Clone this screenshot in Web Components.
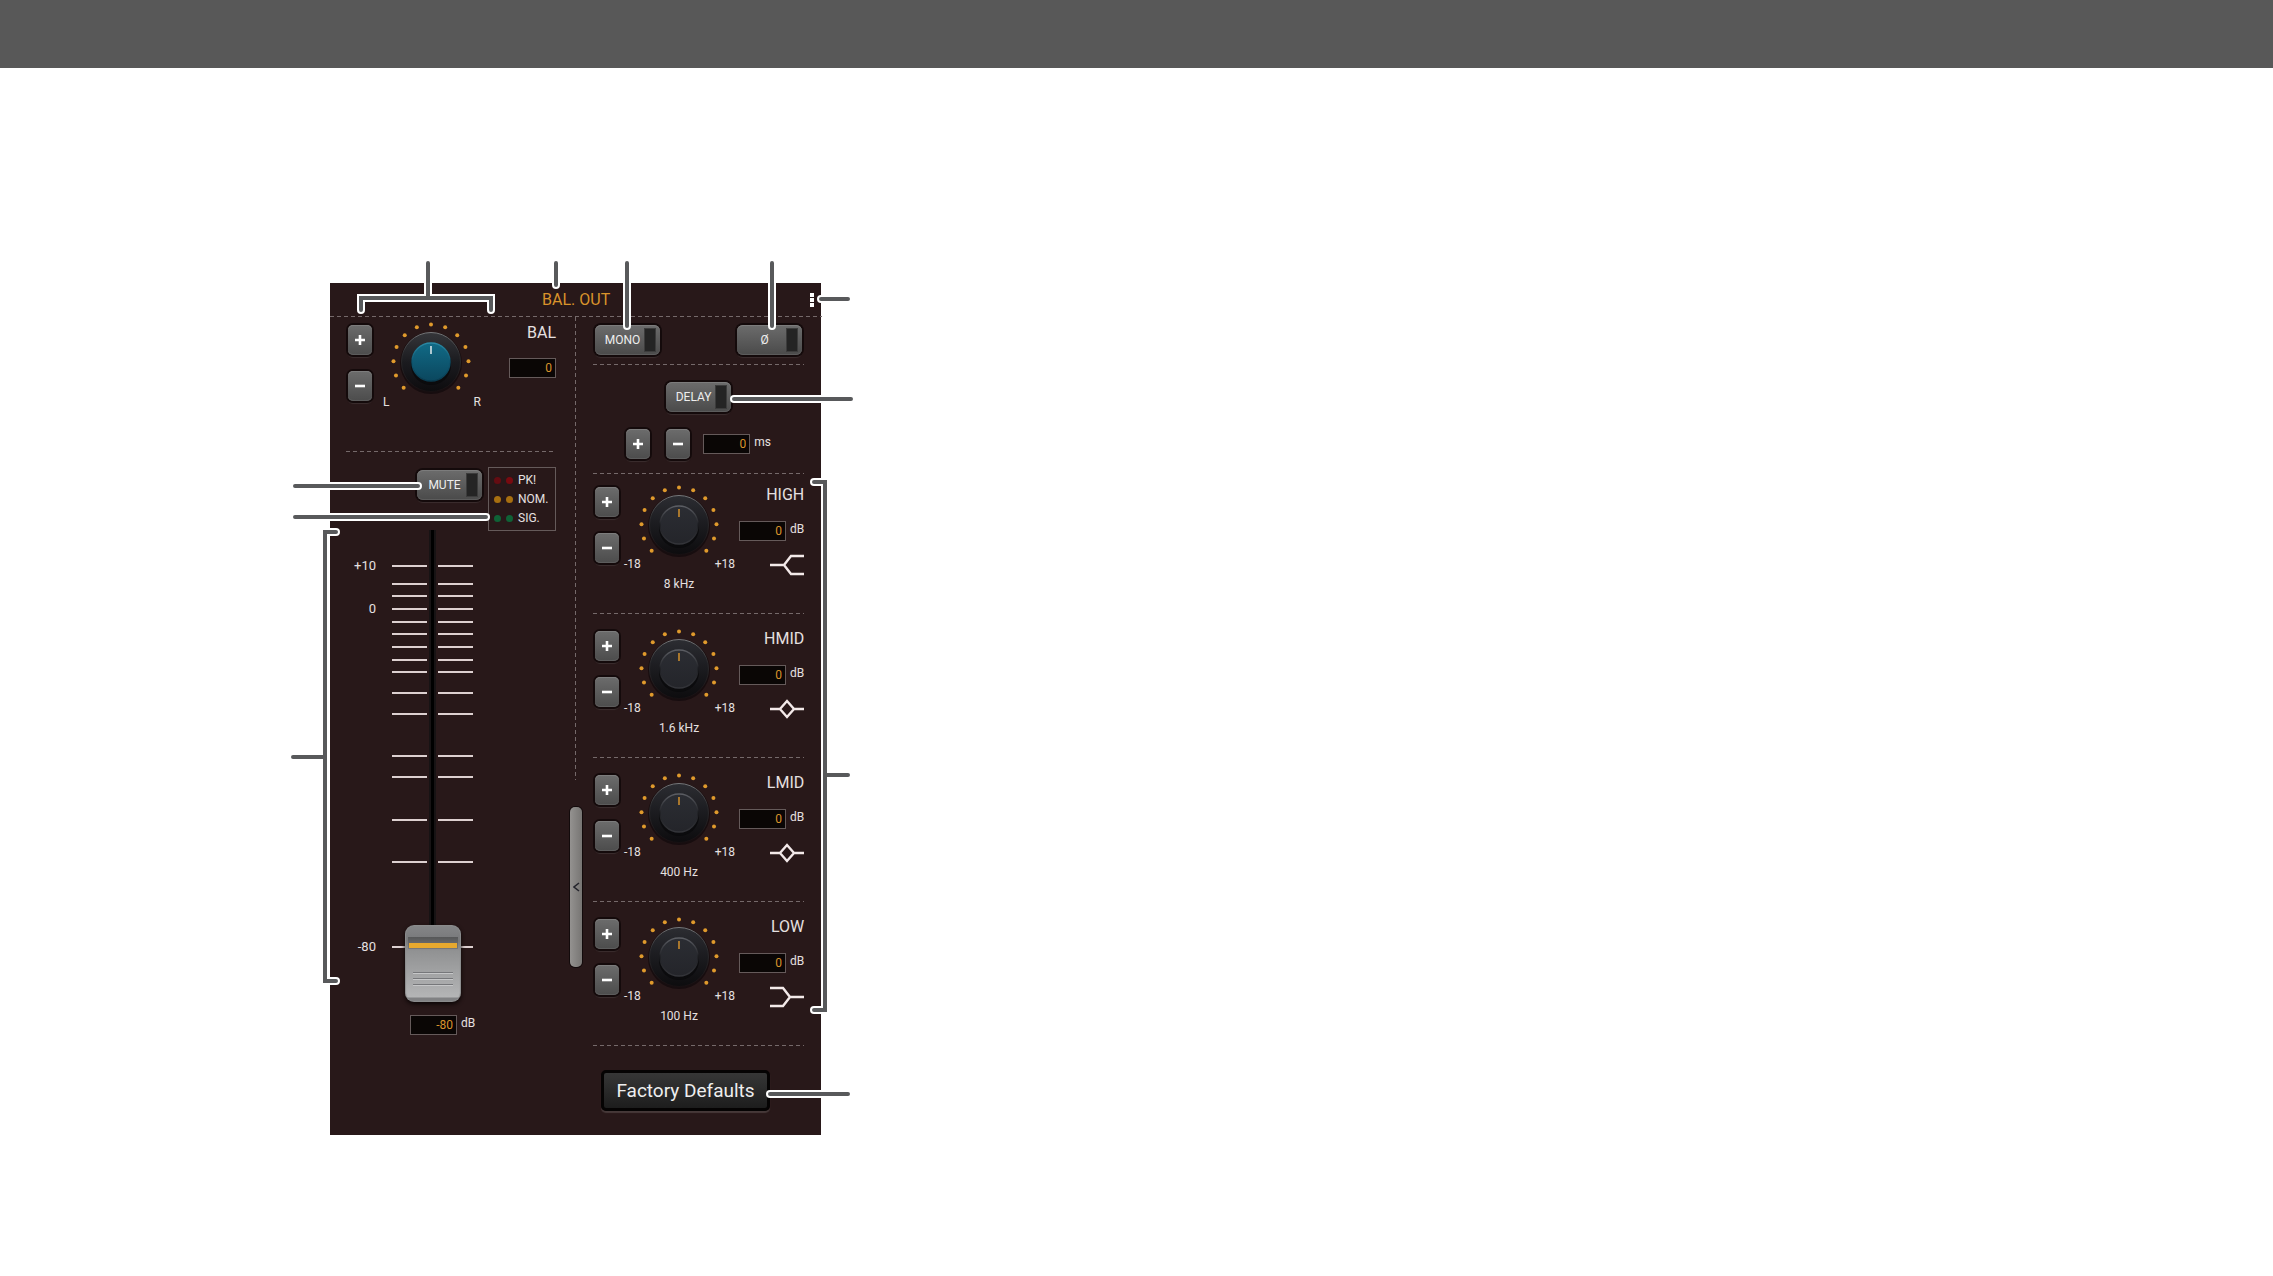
<!DOCTYPE html>
<html lang="en">
<head>
<meta charset="utf-8">
<title>Balanced output</title>
<style>
body{margin:0;background:#fff;font-family:Roboto,"Liberation Sans",sans-serif}
</style>
</head>
<body>
<page-bar></page-bar>
<page-figure>
  <channel-strip></channel-strip>
  <call-outs slot="notes"></call-outs>
</page-figure>
<script>
const define=(name,html,init)=>customElements.define(name,class extends HTMLElement{
  constructor(){
    super();
    this.attachShadow({mode:'open'});
  }
  connectedCallback(){
    if(this.shadowRoot.childNodes.length) return;
    this.shadowRoot.innerHTML=typeof html==='function'?html(this):html;
    if(init) init(this.shadowRoot,this);
  }
});

const attr=(el,name,def='')=>el.getAttribute(name)??def;

define('page-bar',`<style>
:host{display:block;height:68px;background:#585858}
</style>`);

define('page-figure',`<style>
:host{display:block;padding:215px 330px 140px}
div{position:relative;width:fit-content}
</style>
<div><slot></slot><slot name="notes"></slot></div>`);

// leader lines, origin at the strip's top left corner
define('call-outs',()=>{
  const d=[
    'M31 27V15H161V27M98-20V15',
    'M226-20V2',
    'M297-20V43',
    'M442-20V43',
    'M491 16H518',
    'M404 116H521',
    'M-35 203H88',
    'M-35 234H156',
    'M6 249H-5V698H6M-5 474H-37',
    'M484 199H495V727H484M495 492H518',
    'M440 811H518'
  ].join('');
  return `<style>
:host{position:absolute;inset:0;pointer-events:none}
svg{display:block;width:100%;height:100%;overflow:visible}
path{fill:none;stroke-linecap:round}
.halo{stroke:#fff;stroke-width:8}
.line{stroke:#58595b;stroke-width:4}
</style>
<svg aria-hidden="true"><path class="halo" d="${d}"/><path class="line" d="${d}"/></svg>`;
});

define('step-button',el=>`<style>
:host{display:block}
button{display:grid;place-items:center;width:24px;height:30px;padding:0;border:0;border-radius:5px;
  background:linear-gradient(#6c6c6c,#4c4c4c);
  box-shadow:inset 0 1px #7c7c7c,inset 0 -1px #5c5c5c,0 0 0 2px #140a0b,0 3px 1px #3b2e2f}
svg{display:block}
</style>
<button type="button" aria-label="${attr(el,'label')}">
  <svg width="10" height="10" viewBox="0 0 10 10" stroke="#fff" stroke-width="2.6">
    <path d="M0 5H10${attr(el,'dir')==='up'?'M5 0V10':''}"/>
  </svg>
</button>`);

define('step-pair',el=>`<style>
:host{display:flex;flex-direction:column;gap:16px}
</style>
<step-button dir="up" label="${attr(el,'label')} up"></step-button>
<step-button dir="down" label="${attr(el,'label')} down"></step-button>`);

define('toggle-button',`<style>
:host{display:block}
button{display:flex;align-items:center;width:65px;height:30px;padding:3px 5px;border:0;border-radius:6px;
  color:#eee;font:12px/14px Roboto,sans-serif;
  background:linear-gradient(#6c6c6c,#4a4a4a);
  box-shadow:inset 0 1px #7c7c7c,inset 0 -1px #5c5c5c,0 0 0 2px #140a0b,0 3px 1px #3b2e2f}
span{flex:1;text-align:center}
i{width:10px;height:22px;background:#242424;box-shadow:0 0 0 1px #3c3c3c}
</style>
<button type="button" aria-pressed="false"><span><slot></slot></span><i></i></button>`);

define('value-field',el=>`<style>
:host{display:flex;gap:4px}
input{box-sizing:border-box;width:47px;height:20px;margin:0;padding:0 3px;border:1px solid #655a5a;border-radius:0;
  background:#0a0605;color:#d9932b;font:12px/18px Roboto,sans-serif;text-align:right}
label{color:#e6e0e0;font-size:12px;line-height:16px}
</style>
<input id="v" value="${attr(el,'value','0')}" aria-label="${attr(el,'label')}"><label for="v"><slot></slot></label>`);

define('rotary-knob',el=>{
  const dots=Array.from({length:13},(_,i)=>{
    const a=(i-6)*Math.PI*22.2/180;
    return `<circle cx="${(40+37.5*Math.sin(a)).toFixed(2)}" cy="${(40-37.5*Math.cos(a)).toFixed(2)}" r="2"/>`;
  }).join('');
  const blue=attr(el,'tone')==='blue';
  return `<style>
:host{display:block;position:relative;width:80px;height:80px}
svg{display:block}
input{position:absolute;inset:0;width:100%;height:100%;margin:0;opacity:0}
</style>
<svg width="80" height="80" viewBox="0 0 80 80" aria-hidden="true">
  <defs>
    <linearGradient id="skirt" x2="0" y2="1"><stop stop-color="${blue?'#35363a':'#2c2d32'}"/><stop offset=".5" stop-color="#1b1b1f"/><stop offset="1" stop-color="#0d0c0e"/></linearGradient>
    <linearGradient id="rim" x2="0" y2="1"><stop stop-color="#77787a"/><stop offset=".35" stop-color="#2d2d30"/><stop offset="1" stop-color="#171012"/></linearGradient>
    <linearGradient id="cap" x2="0" y2="1">${blue?'<stop stop-color="#116a86"/><stop offset="1" stop-color="#0b475e"/>':'<stop stop-color="#2b2d33"/><stop offset="1" stop-color="#24252a"/>'}</linearGradient>
    <linearGradient id="edge" x2="0" y2="1"><stop stop-color="${blue?'#2a8aa6':'#5c5e64'}"/><stop offset=".5" stop-color="${blue?'#0d5670':'#1f2024'}"/><stop offset="1" stop-color="${blue?'#0a3b4f':'#34353a'}"/></linearGradient>
  </defs>
  <g fill="#e09a2c">${dots}</g>
  <circle cx="40" cy="41" r="31" fill="#170d0f"/>
  <circle cx="40" cy="40" r="29.5" fill="url(#skirt)" stroke="url(#rim)"/>
  <circle cx="40" cy="43" r="20" fill="#0b0b0d"/>
  <circle cx="40" cy="40" r="19" fill="url(#cap)" stroke="url(#edge)" stroke-width="1.4"/>
  <path d="M40 24V32" stroke="${blue?'#d6e4e8':'#c98b2c'}" stroke-width="1.6"/>
</svg>
<input type="range" min="-18" max="18" value="0" aria-label="${attr(el,'label')}">`;
});

define('dash-rule',`<style>
:host{display:block;height:1px;background:repeating-linear-gradient(90deg,#75696a 0 4px,transparent 4px 7px)}
</style>`);

define('filter-icon',el=>{
  const shapes={
    high:'M0 10H14L21 1H34M14 10L21 19H34',
    peak:'M0 10H10M24 10H34M17 2L24 10L17 18L10 10Z',
    low:'M0 1H13L20 10H34M0 19H13L20 10'
  };
  return `<style>
:host{display:block}
svg{display:block}
</style>
<svg width="34" height="20" viewBox="0 0 34 20" fill="none" stroke="#f3e9e9" stroke-width="2.4" overflow="visible" aria-hidden="true"><path d="${shapes[attr(el,'shape','peak')]}"/></svg>`;
});

define('eq-band',el=>`<style>
:host{display:grid;grid-template-columns:24px 120px 1fr;padding:0 0 0 2px;height:126px}
.dial{display:grid;grid-template-columns:1fr 1fr;color:#e6e0e0;font-size:12px;line-height:14px;align-content:start}
rotary-knob{grid-column:span 2;justify-self:center;margin:-2px 0 -8px}
.min{padding-left:5px}
.max{padding-right:4px;text-align:right}
.freq{grid-column:span 2;margin-top:6px;text-align:center}
.side{display:flex;flex-direction:column;align-items:flex-end}
h3{margin:-2px 0 16px;color:#e6e0e0;font-weight:400;font-size:16px;line-height:20px}
filter-icon{margin-top:14px}
</style>
<step-pair label="${attr(el,'name')}"></step-pair>
<div class="dial">
  <rotary-knob label="${attr(el,'name')} gain"></rotary-knob>
  <span class="min">-18</span><span class="max">+18</span>
  <span class="freq">${attr(el,'freq')}</span>
</div>
<div class="side">
  <h3>${attr(el,'name')}</h3>
  <value-field label="${attr(el,'name')} gain value">dB</value-field>
  <filter-icon shape="${attr(el,'shape')}"></filter-icon>
</div>`);

define('balance-control',`<style>
:host{display:grid;grid-template-columns:24px 118px 1fr;height:126px;padding:8px 0 0 2px}
.dial{display:grid;grid-template-columns:1fr 1fr;color:#e6e0e0;font-size:12px;line-height:14px;align-content:start}
rotary-knob{grid-column:span 2;justify-self:center;margin:-3px 0 -7px}
.left{padding-left:11px}
.right{padding-right:9px;text-align:right}
.side{display:flex;flex-direction:column;align-items:flex-end}
h3{margin:-2px 0 15px;color:#e6e0e0;font-weight:400;font-size:16px;line-height:20px}
value-field{gap:0}
</style>
<step-pair label="Balance"></step-pair>
<div class="dial">
  <rotary-knob tone="blue" label="Balance"></rotary-knob>
  <span class="left">L</span><span class="right">R</span>
</div>
<div class="side"><h3>BAL</h3><value-field label="Balance value"></value-field></div>`);

define('level-leds',`<style>
:host{display:grid;box-sizing:border-box;grid-template-columns:8px 8px auto;gap:5px 4px;width:68px;height:64px;
  padding:5px;border:1px solid #655a5a;align-items:center;align-content:start;color:#e6e0e0;font-size:12px;line-height:14px}
i{width:7px;height:7px;border-radius:50%;background:var(--c)}
</style>
<i style="--c:#640c12"></i><i style="--c:#780a10"></i><span>PK!</span>
<i style="--c:#a86f10"></i><i style="--c:#a86f10"></i><span>NOM.</span>
<i style="--c:#0f6236"></i><i style="--c:#0f6236"></i><span>SIG.</span>`);

// scale positions are measured from the top of the slot
define('level-fader',()=>{
  const marks=[[36,'+10'],[54],[66],[79,'0'],[92],[104],[117],[130],[142],[163],[184],[226],[247],[290],[332],[417,'-80']];
  const ticks=marks.map(([y])=>`<path d="M46 ${y}H81M92 ${y}H127"/>`).join('');
  const texts=marks.filter(m=>m[1]).map(([y,t])=>`<text x="30" y="${y+4}">${t}</text>`).join('');
  return `<style>
:host{display:block;position:relative;width:128px;height:472px}
svg{display:block;overflow:visible}
path{stroke:#ddd0d0;stroke-width:2}
text{fill:#e6e0e0;font-size:13px;text-anchor:end}
input{position:absolute;top:0;left:59px;width:56px;height:472px;margin:0;background:none;
  -webkit-appearance:none;appearance:none;writing-mode:vertical-lr;direction:rtl}
input::-webkit-slider-thumb{-webkit-appearance:none;width:56px;height:77px;border-radius:9px;
  background:
    linear-gradient(#e7a92f,#e7a92f) 4px 18px/48px 5px no-repeat,
    linear-gradient(#565758,#77787a) 3px 12px/50px 12px no-repeat,
    repeating-linear-gradient(#76777a 0 1px,#c6c7c8 1px 2px,transparent 2px 6px) 8px 47px/40px 14px no-repeat,
    linear-gradient(#858688,#77787a 16px,#919293 26px,#b4b5b6 72px,#808183 73px);
  box-shadow:inset 0 0 1px 1px #8b8c8d,0 2px 4px #0a0505}
</style>
<svg width="128" height="472" aria-hidden="true">
  <rect x="83" width="7" height="440" fill="#171314"/>
  <rect x="85" width="3" height="440" fill="#000"/>
  ${ticks}${texts}
</svg>
<input type="range" min="-80" max="10" value="-80" aria-label="Level">`;
});

define('channel-strip',`<style>
:host{display:grid;grid-template-columns:245px 1fr;grid-template-rows:33px 1px 1fr;width:491px;min-height:852px;
  background:#281819;color:#e6e0e0}
header{grid-column:span 2;display:grid;grid-template-columns:1fr auto 1fr;align-items:center}
h2{grid-column:2;margin:0;color:#d9932b;font-weight:400;font-size:16px;line-height:20px}
.menu{justify-self:end;margin-right:8px;padding:0;border:0;background:none}
.menu svg{display:block}
.full{grid-column:span 2}
.left{padding:0 19px 0 16px}
.meter{display:flex;justify-content:flex-end;gap:6px;padding-top:15px}
.meter toggle-button{padding-top:3px}
level-fader{margin-top:-1px}
.level value-field{padding:13px 0 0 64px}
.right{position:relative;display:flex;flex-direction:column;padding:0 18px}
.tools{display:flex;justify-content:space-between;padding:8px 2px 9px}
.delay{display:grid;justify-items:center;gap:17px;padding:17px 0 14px}
.delay div{display:flex;align-items:center;gap:16px}
.delay value-field{margin-left:-3px}
eq-band{padding-top:17px}
eq-band.first{padding-top:13px}
.defaults{align-self:flex-start;width:169px;height:41px;margin:24px 0 0 8px;padding:0;border:3px solid #050303;border-radius:5px;
  color:#eee;font:19px/24px Roboto,sans-serif;background:linear-gradient(#363636,#1d1d1d);box-shadow:0 2px 1px #463939}
.split{position:absolute;top:0;left:0;width:1px;height:463px;background:repeating-linear-gradient(#75696a 0 4px,transparent 4px 7px)}
.pull{position:absolute;top:490px;left:-5px;width:12px;height:160px;padding:0;border:0;border-radius:5px;
  background:linear-gradient(90deg,#949290,#777573);box-shadow:0 0 0 1px #120a0b}
.pull svg{display:block;margin:auto}
</style>
<header>
  <h2>BAL. OUT</h2>
  <button class="menu" type="button" aria-label="Menu"><svg width="4" height="14" viewBox="0 0 4 14" fill="#fff"><path d="M0 0H4V4H0ZM0 5H4V9H0ZM0 10H4V14H0Z"/></svg></button>
</header>
<dash-rule class="full"></dash-rule>
<section class="left">
  <balance-control></balance-control>
  <dash-rule></dash-rule>
  <div class="meter"><toggle-button>MUTE</toggle-button><level-leds></level-leds></div>
  <div class="level">
    <level-fader></level-fader>
    <value-field value="-80" label="Level value">dB</value-field>
  </div>
</section>
<section class="right">
  <div class="split"></div>
  <button class="pull" type="button" aria-label="Collapse"><svg width="7" height="10" viewBox="0 0 7 10" fill="none" stroke="#24242c" stroke-width="1.6"><path d="M6 1L1 5L6 9"/></svg></button>
  <div class="tools"><toggle-button>MONO</toggle-button><toggle-button>Ø</toggle-button></div>
  <dash-rule></dash-rule>
  <div class="delay">
    <toggle-button>DELAY</toggle-button>
    <div>
      <step-button dir="up" label="Delay up"></step-button>
      <step-button dir="down" label="Delay down"></step-button>
      <value-field label="Delay value">ms</value-field>
    </div>
  </div>
  <dash-rule></dash-rule>
  <eq-band class="first" name="HIGH" freq="8 kHz" shape="high"></eq-band>
  <dash-rule></dash-rule>
  <eq-band name="HMID" freq="1.6 kHz" shape="peak"></eq-band>
  <dash-rule></dash-rule>
  <eq-band name="LMID" freq="400 Hz" shape="peak"></eq-band>
  <dash-rule></dash-rule>
  <eq-band name="LOW" freq="100 Hz" shape="low"></eq-band>
  <dash-rule></dash-rule>
  <button class="defaults" type="button">Factory Defaults</button>
</section>`);
</script>
</body>
</html>
